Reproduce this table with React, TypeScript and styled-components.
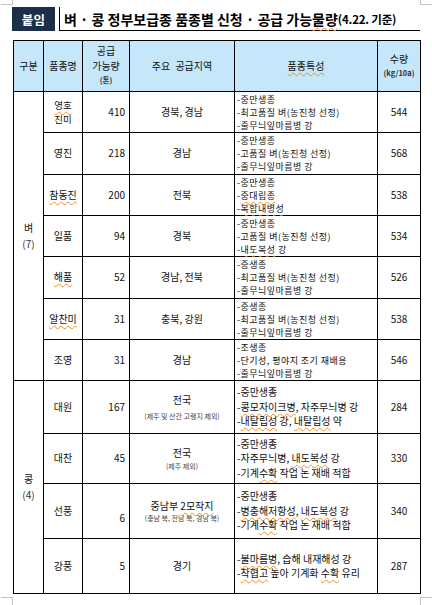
import React from "react";
import styled, { createGlobalStyle } from "styled-components";

const GlobalStyle = createGlobalStyle`
  html, body { margin: 0; padding: 0; background: #fff; }
  body { font-family: "Noto Sans CJK KR", "Noto Sans", sans-serif; color: #111; }
  * { box-sizing: border-box; }
`;

const Page = styled.div`
  position: relative;
  width: 432px;
  height: 605px;
  padding: 7px 0 0 12px;
  overflow: hidden;
`;

const CornerMark = styled.div<{ $v: "top" | "bottom"; $h: "left" | "right" }>`
  position: absolute;
  width: 12px;
  height: 8px;
  border-color: #c4c4c4;
  border-style: solid;
  border-width: 0;
  ${(p) => (p.$v === "top" ? "top: -3px; border-bottom-width: 1px;" : "top: 597px; border-top-width: 1px;")}
  ${(p) => (p.$h === "left" ? "left: 1px; border-right-width: 1px;" : "left: 420px; border-left-width: 1px;")}
`;

const TitleBar = styled.div`
  display: flex;
  gap: 4px;
  width: 408px;
  height: 24px;
`;

const Badge = styled.div`
  width: 43px;
  height: 24px;
  background: #1c2f48;
  color: #fff;
  font-weight: 700;
  font-size: 12.5px;
  display: flex;
  align-items: center;
  justify-content: center;
  letter-spacing: 0.3px;
`;

const TitleBox = styled.div`
  flex: 1;
  border-left: 1px solid #000;
  border-bottom: 1px solid #000;
  padding-left: 4px;
  display: flex;
  align-items: center;
  font-size: 14px;
  font-weight: 700;
  white-space: nowrap;
  color: #000;
`;

const TitleSub = styled.span`
  font-size: 11.5px;
  letter-spacing: -0.2px;
`;

const Squiggle = styled.span`
  text-decoration: underline wavy #f08c28;
  text-decoration-thickness: 1px;
  text-underline-offset: 1.5px;
`;

const Grid = styled.div`
  display: grid;
  grid-template-columns: 29px 38px 46px 104px 142px 42px;
  grid-template-rows: 50px 40px 41px 40px 40px 41px 40px 40px 52px 49px 54px 54px;
  gap: 1px;
  padding: 1px;
  background: #000;
  width: 408px;
  margin: 9px 0 0 1px;
`;

const HeadCell = styled.div`
  background: #c6e7fa;
  display: flex;
  flex-direction: column;
  align-items: center;
  justify-content: center;
  font-size: 10px;
  line-height: 14.5px;
  color: #111;
  text-align: center;
  word-spacing: 3px;
`;

const HeadSmall = styled.span`
  font-size: 7.5px;
  line-height: 14.5px;
  font-weight: 700;
  color: #333;
`;

const Cell = styled.div`
  background: #fff;
  display: flex;
  flex-direction: column;
  align-items: center;
  justify-content: center;
  font-size: 10px;
  line-height: 14.5px;
  text-align: center;
  white-space: nowrap;
`;

const NameCell = styled(Cell)<{ $multi?: boolean }>`
  font-size: ${(p) => (p.$multi ? 9.5 : 10)}px;
  line-height: ${(p) => (p.$multi ? 14 : 14.5)}px;
`;

const GroupCell = styled(Cell)<{ $span: number }>`
  grid-row: span ${(p) => p.$span};
  line-height: 16.5px;
`;

const GroupCount = styled.span`
  color: #333;
`;

const AmountCell = styled(Cell)<{ $shift?: number }>`
  align-items: flex-end;
  padding-right: 4px;
  padding-top: ${(p) => p.$shift ?? 0}px;
`;

const RegionCell = styled(Cell)<{ $subGap?: number }>`
  line-height: 14.5px;
  & > small {
    display: block;
    font-size: 7px;
    line-height: 10.5px;
    color: #444;
    margin-top: ${(p) => p.$subGap ?? 0}px;
  }
`;

const TraitCell = styled(Cell)<{ $compact?: boolean }>`
  align-items: flex-start;
  padding-left: 2px;
  text-align: left;
  font-size: ${(p) => (p.$compact ? 9 : 10)}px;
  line-height: ${(p) => (p.$compact ? 13 : 14.5)}px;
  letter-spacing: ${(p) => (p.$compact ? 0.45 : 0)}px;
`;

type Row = {
  name: React.ReactNode[];
  amount: string;
  shift?: number;
  region: React.ReactNode;
  sub?: string;
  subGap?: number;
  traits: React.ReactNode[];
  yieldVal: string;
};

const rice: Row[] = [
  {
    name: [<Squiggle>영호</Squiggle>, "진미"],
    amount: "410",
    region: "경북, 경남",
    traits: ["-중만생종", "-최고품질 벼(농진청 선정)", "-줄무늬잎마름병 강"],
    yieldVal: "544",
  },
  {
    name: ["영진"],
    amount: "218",
    region: "경남",
    traits: ["-중만생종", "-고품질 벼(농진청 선정)", "-줄무늬잎마름병 강"],
    yieldVal: "568",
  },
  {
    name: [<Squiggle>참동진</Squiggle>],
    amount: "200",
    region: "전북",
    traits: ["-중만생종", <>-<Squiggle>중대립종</Squiggle></>, <>-<Squiggle>복합내병성</Squiggle></>],
    yieldVal: "538",
  },
  {
    name: ["일품"],
    amount: "94",
    region: "경북",
    traits: ["-중만생종", "-고품질 벼(농진청 선정)", <>-<Squiggle>내도복성</Squiggle> 강</>],
    yieldVal: "534",
  },
  {
    name: [<Squiggle>해품</Squiggle>],
    amount: "52",
    region: "경남, 전북",
    traits: ["-중생종", "-최고품질 벼(농진청 선정)", "-줄무늬잎마름병 강"],
    yieldVal: "526",
  },
  {
    name: [<Squiggle>알찬미</Squiggle>],
    amount: "31",
    region: "충북, 강원",
    traits: ["-중생종", "-최고품질 벼(농진청 선정)", "-줄무늬잎마름병 강"],
    yieldVal: "538",
  },
  {
    name: ["조영"],
    amount: "31",
    region: "경남",
    traits: ["-조생종", "-단기성, 평야지 조기 재배용", "-줄무늬잎마름병 강"],
    yieldVal: "546",
  },
];

const bean: Row[] = [
  {
    name: ["대원"],
    amount: "167",
    region: "전국",
    sub: "(제주 및 산간 고랭지 제외)",
    subGap: 3,
    traits: [
      "-중만생종",
      <>-<Squiggle>콩모자이크병</Squiggle>, 자주무늬병 강</>,
      <>-<Squiggle>내탈립성</Squiggle> 강, <Squiggle>내탈립성</Squiggle> 약</>,
    ],
    yieldVal: "284",
  },
  {
    name: ["대찬"],
    amount: "45",
    region: "전국",
    sub: "(제주 제외)",
    traits: [
      "-중만생종",
      <>-자주무늬병, <Squiggle>내도복성</Squiggle> 강</>,
      <>-기계<Squiggle>수확</Squiggle> 작업 논 재배 적합</>,
    ],
    yieldVal: "330",
  },
  {
    name: ["선풍"],
    amount: "6",
    shift: 15,
    region: (<>중남부 <Squiggle>2모작지</Squiggle></>),
    sub: "(충남 북, 전남 북, 경남 북)",
    traits: [
      "-중만생종",
      <>-<Squiggle>병충해저항성</Squiggle>, <Squiggle>내도복성</Squiggle> 강</>,
      <>-기계<Squiggle>수확</Squiggle> 작업 논 재배 적합</>,
    ],
    yieldVal: "340",
  },
  {
    name: ["강풍"],
    amount: "5",
    region: "경기",
    traits: [
      <>-<Squiggle>불마름병</Squiggle>, 습해 내재해성 강</>,
      <>-<Squiggle>착협고</Squiggle> 높아 기계화 <Squiggle>수확</Squiggle> 유리</>,
    ],
    yieldVal: "287",
  },
];

function renderRow(r: Row, key: string, compact: boolean) {
  return (
    <React.Fragment key={key}>
      <NameCell $multi={r.name.length > 1}>
        {r.name.map((n, j) => (
          <span key={j}>{n}</span>
        ))}
      </NameCell>
      <AmountCell $shift={r.shift}>{r.amount}</AmountCell>
      <RegionCell $subGap={r.subGap}>
        <span>{r.region}</span>
        {r.sub && <small>{r.sub}</small>}
      </RegionCell>
      <TraitCell $compact={compact}>
        {r.traits.map((t, j) => (
          <span key={j}>{t}</span>
        ))}
      </TraitCell>
      <Cell>{r.yieldVal}</Cell>
    </React.Fragment>
  );
}

export default function App() {
  return (
    <>
      <GlobalStyle />
      <Page>
        <CornerMark $v="top" $h="left" />
        <CornerMark $v="top" $h="right" />
        <CornerMark $v="bottom" $h="left" />
        <CornerMark $v="bottom" $h="right" />
        <TitleBar>
          <Badge>붙임</Badge>
          <TitleBox>
            벼 · 콩 정부보급종 품종별 신청 · 공급 가능<Squiggle>물량</Squiggle>
            <TitleSub>(4.22. 기준)</TitleSub>
          </TitleBox>
        </TitleBar>
        <Grid>
          <HeadCell>구분</HeadCell>
          <HeadCell>품종명</HeadCell>
          <HeadCell>
            <span>공급</span>
            <span>가능량</span>
            <HeadSmall>(톤)</HeadSmall>
          </HeadCell>
          <HeadCell>주요 공급지역</HeadCell>
          <HeadCell>
            <Squiggle>품종특성</Squiggle>
          </HeadCell>
          <HeadCell>
            <span>수량</span>
            <HeadSmall>(kg/10a)</HeadSmall>
          </HeadCell>

          <GroupCell $span={7}>
            <span>벼</span>
            <GroupCount>(7)</GroupCount>
          </GroupCell>
          {rice.map((r, i) => renderRow(r, `r${i}`, true))}

          <GroupCell $span={4}>
            <span>콩</span>
            <GroupCount>(4)</GroupCount>
          </GroupCell>
          {bean.map((r, i) => renderRow(r, `b${i}`, false))}
        </Grid>
      </Page>
    </>
  );
}
